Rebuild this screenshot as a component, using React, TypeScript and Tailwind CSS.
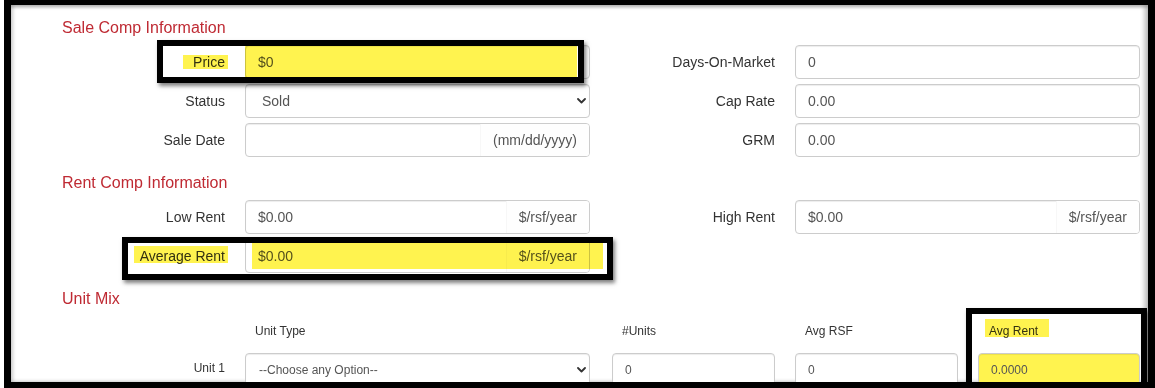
import React from 'react';

const Chevron = () => (
  <svg width="9" height="6" viewBox="0 0 9 6" className="shrink-0">
    <path d="M1 1l3.5 3.5L8 1" fill="none" stroke="#333" strokeWidth="1.8" strokeLinecap="round" strokeLinejoin="round" />
  </svg>
);

interface FieldProps {
  value: string;
  addon?: string;
  select?: boolean;
  small?: boolean;
  yellow?: boolean;
}

const Field: React.FC<FieldProps> = ({ value, addon, select, small, yellow }) => (
  <div
    className={`flex h-[34px] items-center overflow-hidden rounded-[4px] border border-[#ccc] shadow-[inset_0_1px_1px_rgba(0,0,0,0.075)] text-[#555] ${
      small ? 'text-[12px]' : 'text-[14px]'
    } ${yellow ? 'bg-[#fff34f]' : 'bg-white'}`}
  >
    <span className={`flex-1 truncate ${select ? (small ? 'pl-[13px]' : 'pl-4') : 'pl-3'}`}>{value}</span>
    {select && (
      <span className="pr-[3px]">
        <Chevron />
      </span>
    )}
    {addon && (
      <span className="flex h-full items-center border-l border-[#f7f7f7] bg-[#fefefe] px-3">{addon}</span>
    )}
  </div>
);

const Label: React.FC<{ text: string; small?: boolean }> = ({ text, small }) => (
  <div className={`pr-5 text-right text-[#333] ${small ? 'mb-[4px] text-[12px]' : 'text-[14px]'}`}>{text}</div>
);

const Heading: React.FC<{ text: string; className?: string }> = ({ text, className }) => (
  <h2 className={`h-[22px] pl-[51px] text-[16px] leading-[22px] text-[#bf2a33] ${className ?? ''}`}>{text}</h2>
);

const Row: React.FC<{ children: React.ReactNode }> = ({ children }) => (
  <div className="grid h-[34px] grid-cols-[234px_345px_205px_345px] items-center">{children}</div>
);

const unitCols = 'grid grid-cols-[234px_345px_22px_163px_20px_163px_20px_162px]';

export default function App() {
  return (
    <div className="h-[388px] w-[1155px] bg-white pl-[4px] font-['Liberation_Sans',Arial,sans-serif]">
      <div className="relative h-[388px] overflow-hidden border-b-[6px] border-l-[7px] border-r-[7px] border-t-[5px] border-black bg-white shadow-[inset_0_3px_3px_rgba(0,0,0,0.18),inset_3px_0_3px_rgba(0,0,0,0.12),inset_-4px_0_4px_rgba(0,0,0,0.22)]">
        <Heading text="Sale Comp Information" className="mt-[12px]" />
        <div className="mt-[6px] flex flex-col gap-[5px]">
          <Row>
            <Label text="Price" />
            <Field value="$0" />
            <Label text="Days-On-Market" />
            <Field value="0" />
          </Row>
          <Row>
            <Label text="Status" />
            <Field value="Sold" select />
            <Label text="Cap Rate" />
            <Field value="0.00" />
          </Row>
          <Row>
            <Label text="Sale Date" />
            <Field value="" addon="(mm/dd/yyyy)" />
            <Label text="GRM" />
            <Field value="0.00" />
          </Row>
        </div>

        <Heading text="Rent Comp Information" className="mt-[15px]" />
        <div className="mt-[6px] flex flex-col gap-[5px]">
          <Row>
            <Label text="Low Rent" />
            <Field value="$0.00" addon="$/rsf/year" />
            <Label text="High Rent" />
            <Field value="$0.00" addon="$/rsf/year" />
          </Row>
          <Row>
            <Label text="Average Rent" />
            <Field value="$0.00" addon="$/rsf/year" />
            <div />
            <div />
          </Row>
        </div>

        <Heading text="Unit Mix" className="mt-[15px]" />
        <div className={`${unitCols} mt-[11px] text-[12px] leading-[20px] text-[#333]`}>
          <div />
          <div className="pl-[10px]">Unit Type</div>
          <div />
          <div className="pl-[10px]">#Units</div>
          <div />
          <div className="pl-[10px]">Avg RSF</div>
          <div />
          <div className="pl-[11px]">Avg Rent</div>
        </div>
        <div className={`${unitCols} mt-[12px] h-[34px] items-center`}>
          <Label text="Unit 1" small />
          <Field value="--Choose any Option--" select small />
          <div />
          <Field value="0" small />
          <div />
          <Field value="0" small />
          <div />
          <Field value="0.0000" small yellow />
        </div>

        {/* highlighter marks and annotation boxes */}
        <div className="pointer-events-none absolute left-[172px] top-[50px] h-[14px] w-[45px] bg-[#fff34f] mix-blend-multiply" />
        <div className="pointer-events-none absolute left-[234px] top-[40px] h-[32px] w-[332px] bg-[#fff34f] mix-blend-multiply" />
        <div className="pointer-events-none absolute left-[146px] top-[35px] h-[43px] w-[427px] border-[6px] border-black shadow-[2px_3px_4px_rgba(0,0,0,0.5)]" />

        <div className="pointer-events-none absolute left-[123px] top-[241px] h-[17px] w-[94px] bg-[#fff34f] mix-blend-multiply" />
        <div className="pointer-events-none absolute left-[241px] top-[237px] h-[27px] w-[351px] bg-[#fff34f] mix-blend-multiply" />
        <div className="pointer-events-none absolute left-[111px] top-[232px] h-[43px] w-[491px] border-[6px] border-black shadow-[2px_3px_4px_rgba(0,0,0,0.5)]" />

        <div className="pointer-events-none absolute left-[974px] top-[314px] h-[18px] w-[64px] bg-[#fff34f] mix-blend-multiply" />
        <div className="pointer-events-none absolute left-[955px] top-[303px] h-[80px] w-[181px] border-[6px] border-black shadow-[2px_3px_4px_rgba(0,0,0,0.5)]" />
      </div>
    </div>
  );
}
